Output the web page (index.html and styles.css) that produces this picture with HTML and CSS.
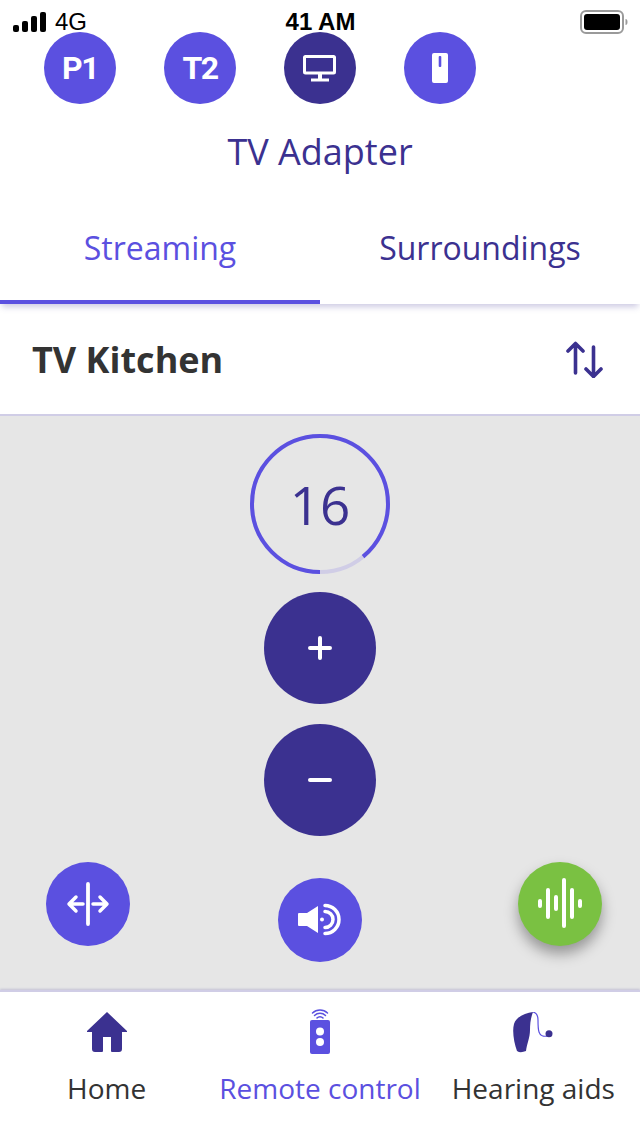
FILE: index.html
```html
<!DOCTYPE html>
<html lang="en">
<head>
  <meta charset="UTF-8" />
  <title>Remote control</title>
  <link rel="stylesheet" href="styles.css">
</head>
<body>
  <div class="app">
    <div class="status">
      <div class="status-left">
        <svg class="signal" width="34" height="20" viewBox="0 0 34 20">
          <rect x="0" y="13" width="6" height="7" rx="2" />
          <rect x="9" y="9" width="6" height="11" rx="2" />
          <rect x="18" y="4" width="6" height="16" rx="2" />
          <rect x="27" y="0" width="6" height="20" rx="2" />
        </svg>
        <span>4G</span>
      </div>
      <div class="status-time">41 AM</div>
      <div class="status-right">
        <svg width="48" height="24" viewBox="0 0 48 24">
          <rect x="1" y="1" width="42" height="22" rx="5" fill="none" stroke="#9a9a9a" stroke-width="2" />
          <rect x="4" y="4" width="36" height="16" rx="3" fill="#000" />
          <path d="M45.500 9a2 3 0 0 1 0 6z" fill="#9a9a9a" />
        </svg>
      </div>
    </div>

    <div class="devices">
      <div class="device">P1</div>
      <div class="device">T2</div>
      <div class="device active">
        <svg width="72" height="72" viewBox="0 0 72 72" fill="none" stroke="#fff">
          <rect x="20.500" y="24.500" width="30" height="16.500" stroke-width="3" rx="1" />
          <path d="M36 42v6" stroke-width="4" />
          <path d="M27 48h18" stroke-width="3" />
        </svg>
      </div>
      <div class="device">
        <svg width="72" height="72" viewBox="0 0 72 72">
          <rect x="28" y="21" width="16" height="30" rx="2" fill="#fff" />
          <rect x="34.700" y="24" width="2.600" height="11" rx="1" fill="#5b50e0" />
        </svg>
      </div>
    </div>

    <div class="title">TV Adapter</div>

    <div class="tabs">
      <div class="tab selected">Streaming</div>
      <div class="tab">Surroundings</div>
    </div>

    <div class="source">
      <div class="source-name">TV Kitchen</div>
      <svg width="38" height="38" viewBox="0 0 38 38" fill="none" stroke="#3b3190" stroke-width="3.600" stroke-linecap="round" stroke-linejoin="round">
        <path d="M9.500 33V3.500M2 11l7.500-7.500L17 11" />
        <path d="M27.500 7v29.500M20 29l7.500 7.500L35 29" />
      </svg>
    </div>

    <div class="controls">
      <div class="gauge">
        <svg width="140" height="140" viewBox="0 0 140 140" fill="none" stroke-width="4">
          <circle cx="70" cy="70" r="68" stroke="#d0cde6" />
          <circle cx="70" cy="70" r="68" stroke="#5b50e0" stroke-dasharray="380 47.300" transform="rotate(90 70 70)" />
        </svg>
        <span class="gauge-value">16</span>
      </div>
      <div class="volume">
        <svg width="24" height="24" viewBox="0 0 24 24" stroke="#fff" stroke-width="4" stroke-linecap="round"><path d="M2 12h20M12 2v20" /></svg>
      </div>
      <div class="volume">
        <svg width="24" height="24" viewBox="0 0 24 24" stroke="#fff" stroke-width="4" stroke-linecap="round"><path d="M2 12h20" /></svg>
      </div>
      <div class="actions">
        <div class="action">
          <svg width="84" height="84" viewBox="0 0 84 84" fill="none" stroke="#fff" stroke-linecap="round" stroke-linejoin="round">
            <path d="M42 22v40" stroke-width="3.800" />
            <path d="M37 42H23.500M30 35l-7 7 7 7" stroke-width="3.500" />
            <path d="M47 42h13.500M54 35l7 7-7 7" stroke-width="3.500" />
          </svg>
        </div>
        <div class="action lower">
          <svg width="84" height="84" viewBox="0 0 84 84" fill="none">
            <path d="M21 35h8l11-7v27l-11-7h-8a1 1 0 0 1-1-1V36a1 1 0 0 1 1-1z" fill="#fff" />
            <circle cx="44" cy="41.500" r="2" fill="#fff" />
            <path d="M47 33.500a8 8 0 0 1 0 16" stroke="#fff" stroke-width="3.500" stroke-linecap="round" />
            <path d="M47 27.500a14 14 0 0 1 0 28" stroke="#fff" stroke-width="3.500" stroke-linecap="round" />
          </svg>
        </div>
        <div class="action talk">
          <svg width="84" height="84" viewBox="0 0 84 84" stroke="#fff" stroke-width="4" stroke-linecap="round">
            <path d="M22 39v5M30 28v27M38 35v12M46 18v46M54 28v27M62 39v5" />
          </svg>
        </div>
      </div>
    </div>

    <div class="nav">
      <div class="nav-item">
        <svg width="40" height="42" viewBox="0 0 40 42">
          <path d="M20 0 40 19v1h-5v17a3 3 0 0 1-3 3h-7a1 1 0 0 1-1-1V25h-8v14a1 1 0 0 1-1 1H8a3 3 0 0 1-3-3V20H0v-1z" fill="#3b3190" />
        </svg>
        <span>Home</span>
      </div>
      <div class="nav-item current">
        <svg width="40" height="46" viewBox="0 0 40 46">
          <rect x="10" y="12" width="20" height="34" rx="2" fill="#5b50e0" />
          <circle cx="20" cy="23.500" r="4" fill="#fff" />
          <circle cx="20" cy="34" r="4" fill="#fff" />
          <g fill="none" stroke="#5b50e0" stroke-width="1.500" stroke-linecap="round">
            <path d="M12.500 5a11 11 0 0 1 15 0" />
            <path d="M14.500 7.500a8 8 0 0 1 11 0" />
            <path d="M17 10a4 4 0 0 1 6 0" />
          </g>
        </svg>
        <span>Remote control</span>
      </div>
      <div class="nav-item">
        <svg width="44" height="42" viewBox="0 1 44 42">
          <path d="M22 1C14 2 5 6 3 13 1 20 3 32 6 40c3 2 6 1 9 0 1-8 4-13 4-21 0-7 1-13 3-18z" fill="#3b3190" />
          <path d="M22 1c4 1 5 5 5 8 0 5 0 9 1 12 1 3 4 5 8 4" fill="none" stroke="#5b50e0" stroke-width="1.200" />
          <circle cx="38" cy="22.700" r="3.500" fill="#3b3190" />
        </svg>
        <span>Hearing aids</span>
      </div>
    </div>
  </div>
</body>
</html>
```

FILE: styles.css
```css
* {
  box-sizing: border-box;
}

body {
  margin: 0;
  background-color: #fff;
  font-family: 'Open Sans', sans-serif;
}

.app {
  width: 640px;
  height: 1136px;
  display: flex;
  flex-direction: column;
  overflow: hidden;
}

.status {
  height: 32px;
  display: grid;
  grid-template-columns: 1fr auto 1fr;
  align-items: center;
  padding: 8px 12px 0 13px;
  font-family: 'Liberation Sans', sans-serif;
  font-size: 24px;
  color: #000;
}

.status-left {
  display: flex;
  align-items: center;
  gap: 8px;
}

.status-right {
  display: flex;
  justify-content: flex-end;
}

.status-time {
  font-weight: bold;
}

.devices {
  display: flex;
  gap: 48px;
  padding-left: 44px;
}

.device {
  width: 72px;
  height: 72px;
  border-radius: 50%;
  background-color: #5b50e0;
  color: #fff;
  display: flex;
  align-items: center;
  justify-content: center;
  font-family: Roboto, sans-serif;
  font-weight: bold;
  font-size: 32px;
  letter-spacing: -1.500px;
}

.device.active {
  background-color: #3b3190;
}

.title {
  margin-top: 24px;
  text-align: center;
  font-size: 36px;
  line-height: 48px;
  color: #3b3190;
}

.tabs {
  display: flex;
  margin-top: 32px;
  height: 96px;
  box-shadow: 0 5px 6px -2px rgba(59, 49, 144, 0.25);
  position: relative;
}

.tab {
  width: 320px;
  height: 96px;
  padding-top: 16px;
  text-align: center;
  font-size: 32px;
  line-height: 48px;
  color: #3b3190;
}

.tab.selected {
  color: #5b50e0;
  border-bottom: 4px solid #5b50e0;
}

.source {
  height: 112px;
  display: flex;
  align-items: center;
  justify-content: space-between;
  padding: 0 36px 0 32px;
  border-bottom: 2px solid #d0cde6;
}

.source-name {
  font-size: 36px;
  font-weight: bold;
  color: #333;
}

.controls {
  flex: 1;
  display: flex;
  flex-direction: column;
  align-items: center;
  padding-top: 18px;
  background-color: #e6e6e6;
}

.gauge {
  width: 140px;
  height: 140px;
  position: relative;
  margin-bottom: 18px;
}

.gauge-value {
  position: absolute;
  inset: 0;
  display: flex;
  align-items: center;
  justify-content: center;
  font-size: 53px;
  color: #3b3190;
}

.volume {
  width: 112px;
  height: 112px;
  margin-bottom: 20px;
  border-radius: 50%;
  background-color: #3b3190;
  display: flex;
  align-items: center;
  justify-content: center;
}

.actions {
  width: 100%;
  display: grid;
  grid-template-columns: 232px 240px 84px;
  align-items: start;
  padding: 6px 0 0 46px;
}

.action {
  width: 84px;
  height: 84px;
  border-radius: 50%;
  background-color: #5b50e0;
}

.action svg {
  display: block;
}

.action.lower {
  margin-top: 16px;
}

.action.talk {
  background-color: #7ac142;
  box-shadow: 0 8px 14px rgba(0, 0, 0, 0.35);
}

.nav {
  height: 146px;
  display: flex;
  background-color: #fff;
  border-top: 2px solid #d0cde6;
  box-shadow: 0 -1px 2px rgba(59, 49, 144, 0.2);
  position: relative;
}

.nav-item {
  width: 213.33px;
  height: 116px;
  position: relative;
  display: flex;
  flex-direction: column;
  align-items: center;
  justify-content: flex-end;
  font-size: 28px;
  line-height: 40px;
  color: #333;
}

.nav-item svg {
  position: absolute;
  left: 50%;
  bottom: 54px;
  transform: translateX(-50%);
}

.nav-item.current {
  color: #5b50e0;
}
```
